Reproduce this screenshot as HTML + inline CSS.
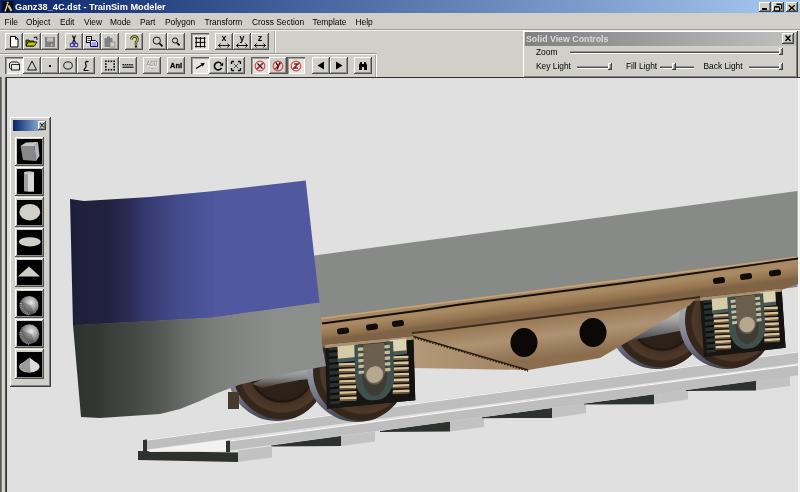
<!DOCTYPE html>
<html><head><meta charset="utf-8">
<style>
*{margin:0;padding:0;box-sizing:border-box}
html,body{width:800px;height:492px;overflow:hidden;background:#d0d0c8;font-family:"Liberation Sans",sans-serif;position:relative}
.a{position:absolute}
#title{position:absolute;left:0;top:0;width:800px;height:13px;background:linear-gradient(90deg,#0a246a 0%,#a6caf0 100%)}
#title .t{position:absolute;left:15px;top:2px;font-weight:bold;font-size:9.2px;color:#fff;line-height:11px;white-space:pre;filter:grayscale(1)}
.tb{position:absolute;top:1.5px;width:12px;height:10.5px;background:#d0d0c8;box-shadow:inset -1px -1px #404040,inset 1px 1px #fff,inset -2px -2px #808080}
#menu{position:absolute;left:0;top:13px;width:800px;height:16px}
.m{position:absolute;top:4px;font-size:8.4px;line-height:10px;color:#000;white-space:pre;filter:grayscale(1)}
.b{position:absolute;background:#d0d0c8;box-shadow:inset -1px -1px #505050,inset 1px 1px #fff,inset -2px -2px #909090}
.bp{position:absolute;background-color:#e6e4de;box-shadow:inset 1px 1px #606060,inset 2px 2px #a0a0a0,inset -1px -1px #fff}
.lbl{position:absolute;font-size:8.4px;line-height:10px;color:#000;white-space:pre;filter:grayscale(1)}
.track{position:absolute;height:3px;background:linear-gradient(#909090 0 33%,#505050 33% 66%,#fff 66%)}
.thumb{position:absolute;width:4px;height:7px;background:#d0d0c8;box-shadow:inset -1px -1px #404040,inset 1px 1px #fff,inset -2px -2px #808080}
</style></head><body>
<div id="title">
 <svg class="a" style="left:2px;top:1px" width="11.5" height="11" viewBox="0 0 11.5 11"><rect width="11.5" height="11" fill="#0c0c14"/><path d="M3 10.5L5.8 2.5" stroke="#e8e8e0" stroke-width="1.2" fill="none"/><path d="M6.5 4.5L9.5 10" stroke="#c8c890" stroke-width="2.2"/><path d="M5.8 0.5v3M4.5 1.5h2.6" stroke="#c0c0c0" stroke-width=".7"/></svg>
 <span class="t">Ganz38_4C.dst - TrainSim Modeler</span>
 <div class="tb" style="left:759px"><div class="a" style="left:3px;top:6.5px;width:5px;height:2px;background:#000"></div></div>
 <div class="tb" style="left:772px"><svg class="a" style="left:0;top:0" width="12" height="11"><path d="M4.5 2.5h5v4.5h-1.5M2.5 5h5v4h-5z" fill="none" stroke="#000" stroke-width="1"/><path d="M4.5 2h5M2.5 4.6h5" stroke="#000" stroke-width="1.2"/></svg></div>
 <div class="tb" style="left:786px"><svg class="a" style="left:0;top:0" width="12" height="11"><path d="M2.8 3.2l6 5.4M8.8 3.2l-6 5.4" stroke="#000" stroke-width="1.3"/></svg></div>
</div>
<div id="menu">
<span class="m" style="left:4.5px">File</span>
<span class="m" style="left:26px">Object</span>
<span class="m" style="left:60px">Edit</span>
<span class="m" style="left:84px">View</span>
<span class="m" style="left:110px">Mode</span>
<span class="m" style="left:140px">Part</span>
<span class="m" style="left:165px">Polygon</span>
<span class="m" style="left:204.5px">Transform</span>
<span class="m" style="left:252px">Cross Section</span>
<span class="m" style="left:312.5px">Template</span>
<span class="m" style="left:355.5px">Help</span>
</div>
<!-- rebar borders -->
<div class="a" style="left:0;top:29px;width:800px;height:1px;background:#a0a09a"></div>
<div class="a" style="left:0;top:30px;width:800px;height:1px;background:#f0f0ec"></div>
<div class="a" style="left:0;top:53px;width:377px;height:1px;background:#98988f"></div>
<div class="a" style="left:0;top:54px;width:377px;height:1px;background:#f4f4f0"></div>
<div class="a" style="left:275px;top:31px;width:1px;height:22px;background:#fff"></div>
<div class="a" style="left:274px;top:31px;width:1px;height:22px;background:#a8a8a0"></div>
<div class="a" style="left:376px;top:55px;width:1px;height:22px;background:#fff"></div>
<div class="a" style="left:375px;top:55px;width:1px;height:22px;background:#a8a8a0"></div>
<div class="b" style="left:5px;top:33px;width:18px;height:17px"><svg width="18" height="17" viewBox="0 0 18 17" style="position:absolute;left:0;top:0"><path d="M5.5 3.5h5l2.5 2.5v8h-7.5z" fill="#fff" stroke="#000" stroke-width="1"/><path d="M10.5 3.5v2.5h2.5" fill="none" stroke="#000"/></svg></div>
<div class="b" style="left:23px;top:33px;width:18px;height:17px"><svg width="18" height="17" viewBox="0 0 18 17" style="position:absolute;left:0;top:0"><path d="M3 7h3l1 1h4v5H3z" fill="#808000" stroke="#000" stroke-width=".8"/><path d="M3 13l2-4h9l-2.5 4z" fill="#c8c800" stroke="#000" stroke-width=".8"/><path d="M11 5q2-2 3 0" stroke="#000" fill="none" stroke-width="1.2"/><circle cx="14" cy="6" r=".8"/></svg></div>
<div class="b" style="left:41px;top:33px;width:18px;height:17px"><svg width="18" height="17" viewBox="0 0 18 17" style="position:absolute;left:0;top:0"><rect x="4" y="4" width="10" height="10" fill="#808080"/><rect x="6" y="4.5" width="6" height="4" fill="#c0c0c0"/><rect x="10" y="11" width="1.5" height="2" fill="#c0c0c0"/></svg></div>
<div class="b" style="left:65px;top:33px;width:18px;height:17px"><svg width="18" height="17" viewBox="0 0 18 17" style="position:absolute;left:0;top:0"><path d="M7.5 2.5l3 7.5M10.5 2.5l-3 7.5" stroke="#000" stroke-width="1.1"/><circle cx="7" cy="12" r="1.9" fill="none" stroke="#3030b0" stroke-width="1.1"/><circle cx="11" cy="12" r="1.9" fill="none" stroke="#3030b0" stroke-width="1.1"/></svg></div>
<div class="b" style="left:83px;top:33px;width:18px;height:17px"><svg width="18" height="17" viewBox="0 0 18 17" style="position:absolute;left:0;top:0"><rect x="3.5" y="3.5" width="5" height="6" fill="#fff" stroke="#000"/><path d="M4.5 5.5h3M4.5 7.5h3" stroke="#000" stroke-width=".7"/><path d="M7.5 7.5h5l2 2v4h-7z" fill="#fff" stroke="#000080"/><path d="M8.5 10h5M8.5 12h5" stroke="#000080" stroke-width=".7"/></svg></div>
<div class="b" style="left:101px;top:33px;width:18px;height:17px"><svg width="18" height="17" viewBox="0 0 18 17" style="position:absolute;left:0;top:0"><rect x="3.5" y="5" width="8" height="9" fill="#808080" rx="1"/><rect x="6" y="3.5" width="3" height="2" fill="#808080"/><rect x="9" y="9" width="5" height="5" fill="#d0d0c8" stroke="#808080" stroke-width=".8"/></svg></div>
<div class="b" style="left:125px;top:33px;width:18px;height:17px"><svg width="18" height="17" viewBox="0 0 18 17" style="position:absolute;left:0;top:0"><path d="M6.5 6.5q0-3 3-3t3 3q0 1.5-1.5 2.5v3" fill="none" stroke="#202000" stroke-width="2.4"/><path d="M6.5 6.5q0-3 3-3t3 3q0 1.5-1.5 2.5v3" fill="none" stroke="#c8c850" stroke-width="1.1"/><circle cx="11" cy="13.5" r="1.2" fill="#202000"/></svg></div>
<div class="b" style="left:149px;top:33px;width:18px;height:17px"><svg width="18" height="17" viewBox="0 0 18 17" style="position:absolute;left:0;top:0"><circle cx="7.8" cy="7.6" r="3.6" fill="none" stroke="#000" stroke-width=".9"/><path d="M10.5 10.3l3 3" stroke="#000" stroke-width="1.8"/></svg></div>
<div class="b" style="left:167px;top:33px;width:18px;height:17px"><svg width="18" height="17" viewBox="0 0 18 17" style="position:absolute;left:0;top:0"><circle cx="8" cy="7.5" r="2.6" fill="none" stroke="#000" stroke-width=".9"/><path d="M10 9.8l2.6 2.6" stroke="#000" stroke-width="1.7"/></svg></div>
<div class="bp" style="left:191px;top:33px;width:18px;height:17px"><svg width="18" height="17" viewBox="0 0 18 17" style="position:absolute;left:0;top:0"><path d="M4 5.2h10.5M4 9.4h10.5M4 13.6h10.5M5.2 4v10.5M9.4 4v10.5M13.6 4v10.5" stroke="#000" stroke-width="1"/></svg></div>
<div class="b" style="left:215px;top:33px;width:18px;height:17px"><svg width="18" height="17" viewBox="0 0 18 17" style="position:absolute;left:0;top:0;filter:grayscale(1)"><text x="9" y="8.3" font-family="Liberation Sans" font-weight="bold" font-size="8.8" text-anchor="middle">x</text><path d="M3.5 12.5h11M3.5 12.5l2.2-2M3.5 12.5l2.2 2M14.5 12.5l-2.2-2M14.5 12.5l-2.2 2" stroke="#000" stroke-width=".9" fill="none"/></svg></div>
<div class="b" style="left:233px;top:33px;width:18px;height:17px"><svg width="18" height="17" viewBox="0 0 18 17" style="position:absolute;left:0;top:0;filter:grayscale(1)"><text x="9" y="8.3" font-family="Liberation Sans" font-weight="bold" font-size="8.8" text-anchor="middle">y</text><path d="M3.5 12.5h11M3.5 12.5l2.2-2M3.5 12.5l2.2 2M14.5 12.5l-2.2-2M14.5 12.5l-2.2 2" stroke="#000" stroke-width=".9" fill="none"/></svg></div>
<div class="b" style="left:251px;top:33px;width:18px;height:17px"><svg width="18" height="17" viewBox="0 0 18 17" style="position:absolute;left:0;top:0;filter:grayscale(1)"><text x="9" y="8.3" font-family="Liberation Sans" font-weight="bold" font-size="8.8" text-anchor="middle">z</text><path d="M3.5 12.5h11M3.5 12.5l2.2-2M3.5 12.5l2.2 2M14.5 12.5l-2.2-2M14.5 12.5l-2.2 2" stroke="#000" stroke-width=".9" fill="none"/></svg></div>
<div class="bp" style="left:5px;top:57px;width:18px;height:17px"><svg width="18" height="17" viewBox="0 0 18 17" style="position:absolute;left:0;top:0"><path d="M4.5 6.5l2-1.5h6l2 2v6h-7l-3-2z" fill="#e8e8e8" stroke="#000" stroke-width=".9"/><path d="M6.5 7.5h8" stroke="#000" stroke-width=".8"/><path d="M6.5 7.5v6" stroke="#000" stroke-width=".8"/></svg></div>
<div class="b" style="left:23px;top:57px;width:18px;height:17px"><svg width="18" height="17" viewBox="0 0 18 17" style="position:absolute;left:0;top:0"><path d="M9 4L13.5 13h-9z" fill="none" stroke="#000" stroke-width=".9"/></svg></div>
<div class="b" style="left:41px;top:57px;width:18px;height:17px"><svg width="18" height="17" viewBox="0 0 18 17" style="position:absolute;left:0;top:0"><rect x="8" y="8" width="2" height="2" fill="#000"/></svg></div>
<div class="b" style="left:59px;top:57px;width:18px;height:17px"><svg width="18" height="17" viewBox="0 0 18 17" style="position:absolute;left:0;top:0"><ellipse cx="9" cy="8.5" rx="4.3" ry="3.6" fill="none" stroke="#000" stroke-width=".9"/></svg></div>
<div class="b" style="left:77px;top:57px;width:18px;height:17px"><svg width="18" height="17" viewBox="0 0 18 17" style="position:absolute;left:0;top:0"><path d="M11.5 5.2C10.5 3.8 8.5 4 8.5 5.8C8.5 7.5 9.8 8.5 8.8 10.3L7.2 12.5V13.5H11.5" fill="none" stroke="#000" stroke-width="1.2"/></svg></div>
<div class="b" style="left:101px;top:57px;width:18px;height:17px"><svg width="18" height="17" viewBox="0 0 18 17" style="position:absolute;left:0;top:0"><rect x="4" y="3.5" width="1.6" height="1.6" fill="#000"/><rect x="6.8" y="3.5" width="1.6" height="1.6" fill="#000"/><rect x="9.6" y="3.5" width="1.6" height="1.6" fill="#000"/><rect x="12.4" y="3.5" width="1.6" height="1.6" fill="#000"/><rect x="4" y="6.3" width="1.6" height="1.6" fill="#000"/><rect x="12.4" y="6.3" width="1.6" height="1.6" fill="#000"/><rect x="4" y="9.1" width="1.6" height="1.6" fill="#000"/><rect x="12.4" y="9.1" width="1.6" height="1.6" fill="#000"/><rect x="4" y="11.9" width="1.6" height="1.6" fill="#000"/><rect x="6.8" y="11.9" width="1.6" height="1.6" fill="#000"/><rect x="9.6" y="11.9" width="1.6" height="1.6" fill="#000"/><rect x="12.4" y="11.9" width="1.6" height="1.6" fill="#000"/></svg></div>
<div class="b" style="left:119px;top:57px;width:18px;height:17px"><svg width="18" height="17" viewBox="0 0 18 17" style="position:absolute;left:0;top:0"><path d="M3.5 10.2h11" stroke="#000" stroke-width="1.1"/><path d="M3.5 7.6h11" stroke="#000" stroke-width="1" stroke-dasharray="1.5 .7"/><path d="M3.5 8.4h11" stroke="#606060" stroke-width=".6"/></svg></div>
<div class="b" style="left:143px;top:57px;width:18px;height:17px"><svg width="18" height="17" viewBox="0 0 18 17" style="position:absolute;left:0;top:0;filter:grayscale(1)"><text x="9.5" y="9.5" font-family="Liberation Mono" font-size="8" text-anchor="middle" fill="#fff" textLength="11" lengthAdjust="spacingAndGlyphs">ADD</text><text x="9" y="9" font-family="Liberation Mono" font-size="8" text-anchor="middle" fill="#8c8c8c" textLength="11" lengthAdjust="spacingAndGlyphs">ADD</text><path d="M8.3 11.2h1.6l-.8 1.2z" fill="#808080"/></svg></div>
<div class="b" style="left:167px;top:57px;width:18px;height:17px"><svg width="18" height="17" viewBox="0 0 18 17" style="position:absolute;left:0;top:0;filter:grayscale(1)"><text x="9" y="11.2" font-family="Liberation Sans" font-weight="bold" font-size="8" text-anchor="middle" textLength="12" lengthAdjust="spacingAndGlyphs" stroke="#000" stroke-width=".3">Ani</text></svg></div>
<div class="bp" style="left:191px;top:57px;width:18px;height:17px"><svg width="18" height="17" viewBox="0 0 18 17" style="position:absolute;left:0;top:0"><path d="M5 11.5L11.5 7.5" stroke="#000" stroke-width="1.4"/><path d="M13.8 6L9.5 6.3 11.8 9.6z" fill="#000"/></svg></div>
<div class="b" style="left:209px;top:57px;width:18px;height:17px"><svg width="18" height="17" viewBox="0 0 18 17" style="position:absolute;left:0;top:0"><path d="M12.3 6.8A3.8 3.8 0 1 0 12.6 10.8" fill="none" stroke="#000" stroke-width="1.6"/><path d="M10.5 8.8h3.6v-3.4z" fill="#000"/></svg></div>
<div class="b" style="left:227px;top:57px;width:18px;height:17px"><svg width="18" height="17" viewBox="0 0 18 17" style="position:absolute;left:0;top:0"><path d="M6.8 6.8l4.4 4.4M11.2 6.8l-4.4 4.4" stroke="#202020" stroke-width=".7"/><path d="M4.5 4.5h2.6M4.5 4.5v2.6M13.5 4.5h-2.6M13.5 4.5v2.6M4.5 13.5h2.6M4.5 13.5v-2.6M13.5 13.5h-2.6M13.5 13.5v-2.6" stroke="#000" stroke-width="1.3"/></svg></div>
<div class="bp" style="left:251px;top:57px;width:18px;height:17px"><svg width="18" height="17" viewBox="0 0 18 17" style="position:absolute;left:0;top:0"><circle cx="9" cy="9" r="4.8" fill="#f0dcdc" fill-opacity=".5" stroke="#d84848" stroke-width="1.2"/><path d="M6.5 6.5l5 5M11.5 6.5l-5 5" stroke="#000" stroke-width="1.1"/><path d="M5.6 12.4l6.8-6.8" stroke="#b82828" stroke-width="1.3"/></svg></div>
<div class="b" style="left:269px;top:57px;width:18px;height:17px"><svg width="18" height="17" viewBox="0 0 18 17" style="position:absolute;left:0;top:0"><circle cx="9" cy="9" r="4.8" fill="#f0dcdc" fill-opacity=".5" stroke="#d84848" stroke-width="1.2"/><path d="M7 5.5l2 3.5M11 5.5l-3 7" stroke="#000" stroke-width="1.3"/><path d="M5.6 12.4l6.8-6.8" stroke="#b82828" stroke-width="1.3"/></svg></div>
<div class="bp" style="left:287px;top:57px;width:18px;height:17px"><svg width="18" height="17" viewBox="0 0 18 17" style="position:absolute;left:0;top:0"><circle cx="9" cy="9" r="4.8" fill="#f0dcdc" fill-opacity=".5" stroke="#d84848" stroke-width="1.2"/><path d="M7 7h4l-4 4h4" fill="none" stroke="#000" stroke-width="1.1"/><path d="M5.6 12.4l6.8-6.8" stroke="#b82828" stroke-width="1.3"/></svg></div>
<div class="b" style="left:312px;top:57px;width:18px;height:17px"><svg width="18" height="17" viewBox="0 0 18 17" style="position:absolute;left:0;top:0"><path d="M12 4.5v8l-6.5-4z" fill="#000"/></svg></div>
<div class="b" style="left:330px;top:57px;width:18px;height:17px"><svg width="18" height="17" viewBox="0 0 18 17" style="position:absolute;left:0;top:0"><path d="M6 4.5v8l6.5-4z" fill="#000"/></svg></div>
<div class="b" style="left:354px;top:57px;width:18px;height:17px"><svg width="18" height="17" viewBox="0 0 18 17" style="position:absolute;left:0;top:0"><path d="M5 13V8l1.5-3h1.5v8zM13 13V8l-1.5-3H10v8z" fill="#000"/><path d="M8 7h2v3H8z" fill="#000"/></svg></div>
<!-- MDI view -->
<div class="a" style="left:0;top:77px;width:7px;height:415px;background:linear-gradient(90deg,#585858 0 1px,#7c7c7c 1px 2px,#d8d8d0 2px 4px,#c4c4c0 4px 5px,#606060 5px 6px,#303030 6px 7px)"></div>
<div class="a" style="left:6px;top:77px;width:794px;height:1px;background:#303030"></div>
<div id="view" class="a" style="left:7px;top:78px;width:791px;height:414px;background:#e0e0e0;overflow:hidden">
<svg width="791" height="414" viewBox="7 78 791 414" style="position:absolute;left:0;top:0">
<defs>
<linearGradient id="gBlue" gradientUnits="userSpaceOnUse" x1="70" y1="0" x2="320" y2="0">
 <stop offset="0.012" stop-color="#1c1f3c"/><stop offset="0.032" stop-color="#20203a"/><stop offset="0.16" stop-color="#21223e"/><stop offset="0.192" stop-color="#262848"/><stop offset="0.24" stop-color="#2c2c54"/><stop offset="0.3" stop-color="#343870"/><stop offset="0.36" stop-color="#3c427c"/><stop offset="0.44" stop-color="#444c8c"/><stop offset="0.52" stop-color="#4a5298"/><stop offset="0.57" stop-color="#4d559c"/><stop offset="0.58" stop-color="#5058a0"/><stop offset="1" stop-color="#5058a0"/></linearGradient>
<linearGradient id="gGray" gradientUnits="userSpaceOnUse" x1="75" y1="0" x2="325" y2="0">
 <stop offset="0.008" stop-color="#303430"/><stop offset="0.088" stop-color="#343634"/><stop offset="0.14" stop-color="#3c3e3c"/><stop offset="0.24" stop-color="#464846"/><stop offset="0.3" stop-color="#4e524e"/><stop offset="0.36" stop-color="#585c58"/><stop offset="0.42" stop-color="#646864"/><stop offset="0.48" stop-color="#707270"/><stop offset="0.54" stop-color="#7a7c7a"/><stop offset="0.62" stop-color="#808280"/><stop offset="0.7" stop-color="#868886"/><stop offset="0.8" stop-color="#8b8e8b"/><stop offset="1" stop-color="#8b8e8b"/></linearGradient>
<linearGradient id="gFrame" gradientUnits="userSpaceOnUse" x1="560" y1="280" x2="563.8" y2="309">
 <stop offset="0" stop-color="#bc9c74"/><stop offset="0.2" stop-color="#a6865e"/><stop offset="0.55" stop-color="#a88a64"/><stop offset="0.85" stop-color="#94744e"/><stop offset="1" stop-color="#806244"/></linearGradient>
<linearGradient id="gBelly" gradientUnits="userSpaceOnUse" x1="560" y1="316" x2="565" y2="356">
 <stop offset="0" stop-color="#9a7a56"/><stop offset="0.45" stop-color="#ae9272"/><stop offset="1" stop-color="#8c6e4e"/></linearGradient>
<linearGradient id="gTri" gradientUnits="userSpaceOnUse" x1="413" y1="0" x2="530" y2="0">
 <stop offset="0" stop-color="#b49878"/><stop offset="1" stop-color="#a08260"/></linearGradient>
<radialGradient id="gWheel" cx="0.5" cy="0.5" r="0.5">
 <stop offset="0" stop-color="#30241a"/><stop offset="0.6" stop-color="#2c2018"/><stop offset="0.64" stop-color="#1c140e"/><stop offset="0.68" stop-color="#463224"/><stop offset="0.84" stop-color="#4e3a2a"/><stop offset="0.88" stop-color="#34261a"/><stop offset="1" stop-color="#34261a"/></radialGradient>
<linearGradient id="gRim" x1="0" y1="0" x2="0" y2="1">
 <stop offset="0" stop-color="#d0d4d4"/><stop offset="0.45" stop-color="#9aa0a4"/><stop offset="0.75" stop-color="#707488"/><stop offset="1" stop-color="#404450"/></linearGradient>
<linearGradient id="gTread" x1="0" y1="0" x2="0" y2="1">
 <stop offset="0" stop-color="#b8bcbc"/><stop offset="0.5" stop-color="#8a8e90"/><stop offset="1" stop-color="#403830"/></linearGradient>
<linearGradient id="gAxle" x1="0" y1="0" x2="0" y2="1">
 <stop offset="0" stop-color="#e0e0e0"/><stop offset="0.5" stop-color="#a8a8a8"/><stop offset="1" stop-color="#404040"/></linearGradient>
</defs>
<polygon points="271.0,445.5 341.0,436.1 341.0,446.1 271.0,446.5" fill="#2e322e"/>
<polygon points="341.0,436.1 375.0,431.6 375.0,441.6 341.0,446.1" fill="#c2c2c2"/>
<polygon points="380.0,430.9 450.0,421.5 450.0,431.5 380.0,431.9" fill="#2e322e"/>
<polygon points="450.0,421.5 484.0,417.0 484.0,427.0 450.0,431.5" fill="#c2c2c2"/>
<polygon points="482.0,417.2 552.0,407.9 552.0,417.9 482.0,418.2" fill="#2e322e"/>
<polygon points="552.0,407.9 586.0,403.3 586.0,413.3 552.0,417.9" fill="#c2c2c2"/>
<polygon points="584.0,403.6 654.0,394.2 654.0,404.2 584.0,404.6" fill="#2e322e"/>
<polygon points="654.0,394.2 688.0,389.6 688.0,399.6 654.0,404.2" fill="#c2c2c2"/>
<polygon points="686.0,389.9 756.0,380.5 756.0,390.5 686.0,390.9" fill="#2e322e"/>
<polygon points="756.0,380.5 790.0,376.0 790.0,386.0 756.0,390.5" fill="#c2c2c2"/>
<polygon points="138.0,451.0 238.0,452.5 238.0,462.0 138.0,460.0" fill="#2e322e"/>
<polygon points="238.0,450.5 272.0,446.0 272.0,457.5 238.0,462.0" fill="#c2c2c2"/>
<polygon points="147.0,450.0 230.0,439.0 230.0,451.0 150.0,452.0" fill="#f2f2f2"/>
<polygon points="147.0,439.5 800.0,351.0 800.0,363.0 147.0,449.5" fill="#bebebe"/>
<polyline points="147.0,440.1 800.0,351.6" stroke="#f4f4f4" stroke-width="1" fill="none"/>
<polygon points="143.0,440.0 147.0,439.5 147.0,452.0 143.0,452.0" fill="#2e322e"/>
<polygon points="230.0,440.5 800.0,364.1 800.0,375.1 230.0,450.5" fill="#bebebe"/>
<polyline points="230.0,441.0 800.0,364.6" stroke="#f8f8f8" stroke-width="1.2" fill="none"/>
<polygon points="226.0,441.0 230.0,440.5 230.0,452.0 226.0,452.0" fill="#2e322e"/>
<clipPath id="cw1"><circle cx="277" cy="371.5" r="49.5"/></clipPath><circle cx="277" cy="371.5" r="49.5" fill="url(#gRim)"/><circle cx="282" cy="370.0" r="49.5" fill="url(#gWheel)" clip-path="url(#cw1)"/>
<clipPath id="cw2"><circle cx="657" cy="320" r="49"/></clipPath><circle cx="657" cy="320" r="49" fill="url(#gRim)"/><circle cx="662" cy="318.5" r="49" fill="url(#gWheel)" clip-path="url(#cw2)"/>
<polygon points="252.0,384.0 275.0,373.0 305.0,367.5 320.0,366.0 320.0,378.0 300.0,380.0 278.0,384.0 262.0,388.0" fill="url(#gTread)"/>
<polygon points="622.0,342.0 640.0,310.0 695.0,296.0 695.0,328.0" fill="url(#gAxle)"/>
<clipPath id="cw3"><circle cx="357" cy="372" r="50"/></clipPath><circle cx="357" cy="372" r="50" fill="url(#gRim)"/><circle cx="363" cy="371" r="50" fill="url(#gWheel)" clip-path="url(#cw3)"/>
<clipPath id="cw4"><circle cx="727" cy="321" r="48"/></clipPath><circle cx="727" cy="321" r="48" fill="url(#gRim)"/><circle cx="733" cy="320" r="48" fill="url(#gWheel)" clip-path="url(#cw4)"/>
<rect x="228" y="392" width="11" height="17" fill="#463a2a"/>
<polygon points="300.0,257.4 797.5,191.0 797.5,287.0 300.0,347.0" fill="#878a86"/>
<polygon points="321.0,317.6 460.0,299.8 640.0,276.7 798.0,256.0 798.0,284.0 781.0,290.0 640.0,308.0 440.0,333.0 321.0,348.0" fill="url(#gFrame)"/>
<polyline points="321.0,318.5 460.0,300.6 640.0,277.6 798.0,257.0" stroke="#c4a47a" stroke-width="1.6" fill="none"/>
<polyline points="322.0,323.5 420.0,310.5 460.0,304.5 640.0,281.0 798.0,258.5" stroke="#141008" stroke-width="1.9" fill="none"/>
<rect x="337" y="328" width="12" height="6" rx="2.5" fill="#100c08" transform="rotate(-7 343 331)"/>
<rect x="366" y="324" width="12" height="6" rx="2.5" fill="#100c08" transform="rotate(-7 372 327)"/>
<rect x="392" y="320.5" width="12" height="6" rx="2.5" fill="#100c08" transform="rotate(-7 398 323.5)"/>
<rect x="713" y="277.5" width="12" height="6" rx="2.5" fill="#100c08" transform="rotate(-7 719 280.5)"/>
<rect x="740" y="273.5" width="12" height="6" rx="2.5" fill="#100c08" transform="rotate(-7 746 276.5)"/>
<rect x="769" y="270" width="12" height="6" rx="2.5" fill="#100c08" transform="rotate(-7 775 273)"/>
<polygon points="413.0,336.0 413.0,368.0 530.0,370.0" fill="url(#gTri)"/>
<polygon points="412.0,332.0 640.0,306.0 696.0,298.0 690.0,305.0 600.0,358.0 528.0,370.0 412.0,336.0" fill="url(#gBelly)"/>
<polyline points="412.0,336.0 528.0,370.0" stroke="#2a1e12" stroke-width="1.4" fill="none"/>
<polyline points="412.0,337.0 528.0,371.0" stroke="#2a1e12" stroke-width="1.6" stroke-dasharray="1.5 1.5" fill="none"/>
<polyline points="412.0,333.0 440.0,330.0 640.0,305.0 700.0,297.0" stroke="#3a2c1c" stroke-width="1.8" fill="none"/>
<ellipse cx="524" cy="342.6" rx="13.5" ry="14.5" fill="#0c0806"/>
<ellipse cx="593" cy="332.4" rx="13.5" ry="14.5" fill="#0c0806"/>
<g transform="matrix(0.8830,-0.0850,0.0200,0.6420,325.00,344.50)"><rect x="0" y="0" width="100" height="100" fill="#181612"/><rect x="0" y="0" width="100" height="6" fill="#a89070"/><rect x="4" y="6" width="11" height="88" fill="#283230"/><rect x="4" y="10.0" width="11" height="3.5" fill="#0e100e"/><rect x="4" y="19.5" width="11" height="3.5" fill="#0e100e"/><rect x="4" y="29.0" width="11" height="3.5" fill="#0e100e"/><rect x="4" y="38.5" width="11" height="3.5" fill="#0e100e"/><rect x="4" y="48.0" width="11" height="3.5" fill="#0e100e"/><rect x="4" y="57.5" width="11" height="3.5" fill="#0e100e"/><rect x="4" y="67.0" width="11" height="3.5" fill="#0e100e"/><rect x="4" y="76.5" width="11" height="3.5" fill="#0e100e"/><rect x="4" y="86.0" width="11" height="3.5" fill="#0e100e"/><rect x="92" y="6" width="8" height="88" fill="#141210"/><rect x="14" y="5" width="20" height="23" fill="#d6caa8"/><rect x="14" y="24" width="20" height="6" fill="#4a5a56"/><rect x="73" y="3" width="19" height="22" fill="#ddd2b2"/><rect x="73" y="21" width="19" height="6" fill="#4a5a56"/><rect x="15" y="32.0" width="19" height="4" fill="#d8c49c" transform="rotate(5 24 32.0)"/><rect x="15" y="36.0" width="19" height="2.2" fill="#7a5c3c" transform="rotate(5 24 32.0)"/><rect x="15" y="40.8" width="19" height="4" fill="#d8c49c" transform="rotate(5 24 40.8)"/><rect x="15" y="44.8" width="19" height="2.2" fill="#7a5c3c" transform="rotate(5 24 40.8)"/><rect x="15" y="49.6" width="19" height="4" fill="#d8c49c" transform="rotate(5 24 49.6)"/><rect x="15" y="53.6" width="19" height="2.2" fill="#7a5c3c" transform="rotate(5 24 49.6)"/><rect x="15" y="58.4" width="19" height="4" fill="#d8c49c" transform="rotate(5 24 58.400000000000006)"/><rect x="15" y="62.4" width="19" height="2.2" fill="#7a5c3c" transform="rotate(5 24 58.400000000000006)"/><rect x="15" y="67.2" width="19" height="4" fill="#d8c49c" transform="rotate(5 24 67.2)"/><rect x="15" y="71.2" width="19" height="2.2" fill="#7a5c3c" transform="rotate(5 24 67.2)"/><rect x="15" y="76.0" width="19" height="4" fill="#d8c49c" transform="rotate(5 24 76.0)"/><rect x="15" y="80.0" width="19" height="2.2" fill="#7a5c3c" transform="rotate(5 24 76.0)"/><rect x="15" y="84.8" width="19" height="4" fill="#d8c49c" transform="rotate(5 24 84.80000000000001)"/><rect x="15" y="88.8" width="19" height="2.2" fill="#7a5c3c" transform="rotate(5 24 84.80000000000001)"/><rect x="75" y="29.0" width="19" height="4" fill="#d8c49c" transform="rotate(5 84 29.0)"/><rect x="75" y="33.0" width="19" height="2.2" fill="#7a5c3c" transform="rotate(5 84 29.0)"/><rect x="75" y="37.8" width="19" height="4" fill="#d8c49c" transform="rotate(5 84 37.8)"/><rect x="75" y="41.8" width="19" height="2.2" fill="#7a5c3c" transform="rotate(5 84 37.8)"/><rect x="75" y="46.6" width="19" height="4" fill="#d8c49c" transform="rotate(5 84 46.6)"/><rect x="75" y="50.6" width="19" height="2.2" fill="#7a5c3c" transform="rotate(5 84 46.6)"/><rect x="75" y="55.4" width="19" height="4" fill="#d8c49c" transform="rotate(5 84 55.400000000000006)"/><rect x="75" y="59.4" width="19" height="2.2" fill="#7a5c3c" transform="rotate(5 84 55.400000000000006)"/><rect x="75" y="64.2" width="19" height="4" fill="#d8c49c" transform="rotate(5 84 64.2)"/><rect x="75" y="68.2" width="19" height="2.2" fill="#7a5c3c" transform="rotate(5 84 64.2)"/><rect x="75" y="73.0" width="19" height="4" fill="#d8c49c" transform="rotate(5 84 73.0)"/><rect x="75" y="77.0" width="19" height="2.2" fill="#7a5c3c" transform="rotate(5 84 73.0)"/><rect x="75" y="81.8" width="19" height="4" fill="#d8c49c" transform="rotate(5 84 81.80000000000001)"/><rect x="75" y="85.8" width="19" height="2.2" fill="#7a5c3c" transform="rotate(5 84 81.80000000000001)"/><path d="M37 5 V58 A18 33 0 0 0 73 58 V5" fill="#3e3c34" stroke="#40504c" stroke-width="8"/><path d="M43 6 V48 A12 22 0 0 0 67 48 V6z" fill="#6a5e4e"/><ellipse cx="55" cy="54" rx="9.5" ry="13" fill="#b4a890"/><rect x="37" y="10" width="6" height="5" fill="#c4bc9c"/><rect x="67" y="10" width="6" height="5" fill="#c4bc9c"/><rect x="37" y="19" width="6" height="5" fill="#c4bc9c"/><rect x="67" y="19" width="6" height="5" fill="#c4bc9c"/><rect x="37" y="28" width="6" height="5" fill="#c4bc9c"/><rect x="67" y="28" width="6" height="5" fill="#c4bc9c"/><rect x="37" y="37" width="6" height="5" fill="#c4bc9c"/><rect x="67" y="37" width="6" height="5" fill="#c4bc9c"/><rect x="37" y="46" width="6" height="5" fill="#c4bc9c"/><rect x="67" y="46" width="6" height="5" fill="#c4bc9c"/><rect x="0" y="94" width="100" height="6" fill="#181612"/></g>
<g transform="matrix(0.8160,-0.0920,0.0400,0.5960,700.00,297.40)"><rect x="0" y="0" width="100" height="100" fill="#181612"/><rect x="0" y="0" width="100" height="6" fill="#a89070"/><rect x="4" y="6" width="11" height="88" fill="#283230"/><rect x="4" y="10.0" width="11" height="3.5" fill="#0e100e"/><rect x="4" y="19.5" width="11" height="3.5" fill="#0e100e"/><rect x="4" y="29.0" width="11" height="3.5" fill="#0e100e"/><rect x="4" y="38.5" width="11" height="3.5" fill="#0e100e"/><rect x="4" y="48.0" width="11" height="3.5" fill="#0e100e"/><rect x="4" y="57.5" width="11" height="3.5" fill="#0e100e"/><rect x="4" y="67.0" width="11" height="3.5" fill="#0e100e"/><rect x="4" y="76.5" width="11" height="3.5" fill="#0e100e"/><rect x="4" y="86.0" width="11" height="3.5" fill="#0e100e"/><rect x="92" y="6" width="8" height="88" fill="#141210"/><rect x="14" y="5" width="20" height="23" fill="#d6caa8"/><rect x="14" y="24" width="20" height="6" fill="#4a5a56"/><rect x="73" y="3" width="19" height="22" fill="#ddd2b2"/><rect x="73" y="21" width="19" height="6" fill="#4a5a56"/><rect x="15" y="32.0" width="19" height="4" fill="#d8c49c" transform="rotate(5 24 32.0)"/><rect x="15" y="36.0" width="19" height="2.2" fill="#7a5c3c" transform="rotate(5 24 32.0)"/><rect x="15" y="40.8" width="19" height="4" fill="#d8c49c" transform="rotate(5 24 40.8)"/><rect x="15" y="44.8" width="19" height="2.2" fill="#7a5c3c" transform="rotate(5 24 40.8)"/><rect x="15" y="49.6" width="19" height="4" fill="#d8c49c" transform="rotate(5 24 49.6)"/><rect x="15" y="53.6" width="19" height="2.2" fill="#7a5c3c" transform="rotate(5 24 49.6)"/><rect x="15" y="58.4" width="19" height="4" fill="#d8c49c" transform="rotate(5 24 58.400000000000006)"/><rect x="15" y="62.4" width="19" height="2.2" fill="#7a5c3c" transform="rotate(5 24 58.400000000000006)"/><rect x="15" y="67.2" width="19" height="4" fill="#d8c49c" transform="rotate(5 24 67.2)"/><rect x="15" y="71.2" width="19" height="2.2" fill="#7a5c3c" transform="rotate(5 24 67.2)"/><rect x="15" y="76.0" width="19" height="4" fill="#d8c49c" transform="rotate(5 24 76.0)"/><rect x="15" y="80.0" width="19" height="2.2" fill="#7a5c3c" transform="rotate(5 24 76.0)"/><rect x="15" y="84.8" width="19" height="4" fill="#d8c49c" transform="rotate(5 24 84.80000000000001)"/><rect x="15" y="88.8" width="19" height="2.2" fill="#7a5c3c" transform="rotate(5 24 84.80000000000001)"/><rect x="75" y="29.0" width="19" height="4" fill="#d8c49c" transform="rotate(5 84 29.0)"/><rect x="75" y="33.0" width="19" height="2.2" fill="#7a5c3c" transform="rotate(5 84 29.0)"/><rect x="75" y="37.8" width="19" height="4" fill="#d8c49c" transform="rotate(5 84 37.8)"/><rect x="75" y="41.8" width="19" height="2.2" fill="#7a5c3c" transform="rotate(5 84 37.8)"/><rect x="75" y="46.6" width="19" height="4" fill="#d8c49c" transform="rotate(5 84 46.6)"/><rect x="75" y="50.6" width="19" height="2.2" fill="#7a5c3c" transform="rotate(5 84 46.6)"/><rect x="75" y="55.4" width="19" height="4" fill="#d8c49c" transform="rotate(5 84 55.400000000000006)"/><rect x="75" y="59.4" width="19" height="2.2" fill="#7a5c3c" transform="rotate(5 84 55.400000000000006)"/><rect x="75" y="64.2" width="19" height="4" fill="#d8c49c" transform="rotate(5 84 64.2)"/><rect x="75" y="68.2" width="19" height="2.2" fill="#7a5c3c" transform="rotate(5 84 64.2)"/><rect x="75" y="73.0" width="19" height="4" fill="#d8c49c" transform="rotate(5 84 73.0)"/><rect x="75" y="77.0" width="19" height="2.2" fill="#7a5c3c" transform="rotate(5 84 73.0)"/><rect x="75" y="81.8" width="19" height="4" fill="#d8c49c" transform="rotate(5 84 81.80000000000001)"/><rect x="75" y="85.8" width="19" height="2.2" fill="#7a5c3c" transform="rotate(5 84 81.80000000000001)"/><path d="M37 5 V58 A18 33 0 0 0 73 58 V5" fill="#3e3c34" stroke="#40504c" stroke-width="8"/><path d="M43 6 V48 A12 22 0 0 0 67 48 V6z" fill="#6a5e4e"/><ellipse cx="55" cy="54" rx="9.5" ry="13" fill="#b4a890"/><rect x="37" y="10" width="6" height="5" fill="#c4bc9c"/><rect x="67" y="10" width="6" height="5" fill="#c4bc9c"/><rect x="37" y="19" width="6" height="5" fill="#c4bc9c"/><rect x="67" y="19" width="6" height="5" fill="#c4bc9c"/><rect x="37" y="28" width="6" height="5" fill="#c4bc9c"/><rect x="67" y="28" width="6" height="5" fill="#c4bc9c"/><rect x="37" y="37" width="6" height="5" fill="#c4bc9c"/><rect x="67" y="37" width="6" height="5" fill="#c4bc9c"/><rect x="37" y="46" width="6" height="5" fill="#c4bc9c"/><rect x="67" y="46" width="6" height="5" fill="#c4bc9c"/><rect x="0" y="94" width="100" height="6" fill="#181612"/></g>
<polygon points="70.0,199.0 84.0,201.0 150.0,197.0 212.0,191.2 250.0,187.0 305.7,180.4 319.5,303.0 212.0,318.0 73.0,325.5" fill="url(#gBlue)"/>
<polygon points="73.0,325.0 212.0,317.5 319.5,302.5 322.0,345.0 326.0,366.0 300.0,371.0 280.0,375.0 240.0,384.5 215.0,394.0 200.0,401.0 180.0,409.0 160.0,414.0 100.0,418.0 81.0,417.0" fill="url(#gGray)"/>
</svg>
</div>
<div class="a" style="left:798px;top:78px;width:2px;height:414px;background:#f4f4f4"></div>
<div class="a" style="left:10px;top:116.5px;width:41px;height:270px;background:#d0d0c8;box-shadow:inset -1px -1px #404040,inset 1px 1px #fff,inset -2px -2px #808080"></div>
<div class="a" style="left:12.5px;top:119.5px;width:33.5px;height:11.2px;background:linear-gradient(90deg,#0a246a,#a6caf0)"></div>
<div class="tb" style="left:38px;top:121px;width:8px;height:8.5px"><svg class="a" style="left:0;top:0" width="8" height="8.5"><path d="M2 2l4 4.5M6 2l-4 4.5" stroke="#202020" stroke-width="1.1"/></svg></div>
<div class="b" style="left:15px;top:136.5px;width:29px;height:29.4px"></div>
<svg class="a" style="left:17.2px;top:138.8px" width="25" height="25" viewBox="0 0 25 25"><rect width="25" height="25" fill="#000"/><polygon points="3.5,7 17.5,7 19,22 6,21" fill="#888888"/><polygon points="3.5,7 9,3.5 21,3 17.5,7" fill="#c8c8c8"/><polygon points="17.5,7 21,3 22.5,17 19,22" fill="#b4b4bc"/></svg>
<div class="b" style="left:15px;top:166.9px;width:29px;height:29.4px"></div>
<svg class="a" style="left:17.2px;top:169.2px" width="25" height="25" viewBox="0 0 25 25"><rect width="25" height="25" fill="#000"/><rect x="7" y="3.5" width="10" height="19" fill="#a0a0a0" rx="1"/><rect x="11" y="3.5" width="6" height="19" fill="#d8d8d8"/><ellipse cx="12" cy="3.8" rx="5" ry="1.5" fill="#c8c8c8"/></svg>
<div class="b" style="left:15px;top:197.3px;width:29px;height:29.4px"></div>
<svg class="a" style="left:17.2px;top:199.6px" width="25" height="25" viewBox="0 0 25 25"><rect width="25" height="25" fill="#000"/><ellipse cx="12.8" cy="12.2" rx="10.4" ry="8.3" fill="#d0d0c8"/></svg>
<div class="b" style="left:15px;top:227.7px;width:29px;height:29.4px"></div>
<svg class="a" style="left:17.2px;top:230.0px" width="25" height="25" viewBox="0 0 25 25"><rect width="25" height="25" fill="#000"/><ellipse cx="12.8" cy="11.8" rx="11" ry="4.6" fill="#d0d0c8"/></svg>
<div class="b" style="left:15px;top:258.1px;width:29px;height:29.4px"></div>
<svg class="a" style="left:17.2px;top:260.4px" width="25" height="25" viewBox="0 0 25 25"><rect width="25" height="25" fill="#000"/><polygon points="12,6.6 23,16.6 0.8,16.6" fill="#d0d0c8"/></svg>
<div class="b" style="left:15px;top:288.5px;width:29px;height:29.4px"></div>
<svg class="a" style="left:17.2px;top:290.8px" width="25" height="25" viewBox="0 0 25 25"><rect width="25" height="25" fill="#000"/><defs><radialGradient id="sph" cx="0.6" cy="0.35" r="0.7"><stop offset="0" stop-color="#e8e8e8"/><stop offset="0.35" stop-color="#b0b0b0"/><stop offset="0.7" stop-color="#707070"/><stop offset="1" stop-color="#505050"/></radialGradient></defs><circle cx="12" cy="14.5" r="9.6" fill="url(#sph)"/><path d="M4 12q0 8 8 11.5" stroke="#d8d8d8" stroke-width="2.6" stroke-dasharray="0.8 1" fill="none" opacity=".8"/><path d="M4 10a9.6 9.6 0 0 0 13 12.5l-3-8z" fill="#404040" opacity=".35"/></svg>
<div class="b" style="left:15px;top:318.9px;width:29px;height:29.4px"></div>
<svg class="a" style="left:17.2px;top:321.2px" width="25" height="25" viewBox="0 0 25 25"><rect width="25" height="25" fill="#000"/><circle cx="12.3" cy="13.3" r="10" fill="url(#sph)"/><path d="M4 11q0 8 8.5 12" stroke="#d8d8d8" stroke-width="2.6" stroke-dasharray="0.8 1" fill="none" opacity=".8"/><path d="M4 9a10 10 0 0 0 13.5 12.8l-3-8.5z" fill="#404040" opacity=".35"/></svg>
<div class="b" style="left:15px;top:349.3px;width:29px;height:29.4px"></div>
<svg class="a" style="left:17.2px;top:351.6px" width="25" height="25" viewBox="0 0 25 25"><rect width="25" height="25" fill="#000"/><ellipse cx="12.6" cy="14.8" rx="10" ry="5.6" fill="#dcdcdc"/><path d="M12.3 5.5L20.6 11.4L12.6 14.8z" fill="#dcdcdc"/><path d="M12.3 5.5L4.6 11.4A10 5.6 0 0 0 13.6 20.38z" fill="#9c9c9c"/><path d="M4.6 11.4A10 5.6 0 0 0 9 20" fill="none" stroke="#d0d0d0" stroke-width=".6"/></svg>
<!-- Solid View Controls -->
<div class="a" style="left:523px;top:30.5px;width:275px;height:47px;background:#d0d0c8;box-shadow:inset -1px -1px #404040,inset 1px 1px #fff,inset -2px -2px #808080"></div>
<div class="a" style="left:525px;top:32px;width:271px;height:13.5px;background:linear-gradient(90deg,#808080,#c0c0c0)"></div>
<span class="a" style="left:526px;top:33.5px;font-weight:bold;font-size:8.8px;line-height:11px;color:#dcdcd4;white-space:pre;filter:grayscale(1)">Solid View Controls</span>
<div class="tb" style="left:782px;top:33px;width:12px;height:11px"><svg class="a" style="left:0;top:0" width="12" height="11"><path d="M3.5 2.5l5 5.5M8.5 2.5l-5 5.5" stroke="#000" stroke-width="1.4"/></svg></div>
<span class="lbl" style="left:536px;top:46.5px">Zoom</span>
<div class="track" style="left:570px;top:50.5px;width:213px"></div>
<div class="thumb" style="left:779px;top:48px"></div>
<span class="lbl" style="left:536px;top:61px">Key Light</span>
<div class="track" style="left:577px;top:65.5px;width:35px"></div>
<div class="thumb" style="left:608px;top:63px"></div>
<span class="lbl" style="left:626px;top:61px">Fill Light</span>
<div class="track" style="left:660px;top:65.5px;width:34px"></div>
<div class="thumb" style="left:672px;top:63px"></div>
<span class="lbl" style="left:703.5px;top:61px">Back Light</span>
<div class="track" style="left:749px;top:65.5px;width:34px"></div>
<div class="thumb" style="left:779px;top:63px"></div>
</body></html>
